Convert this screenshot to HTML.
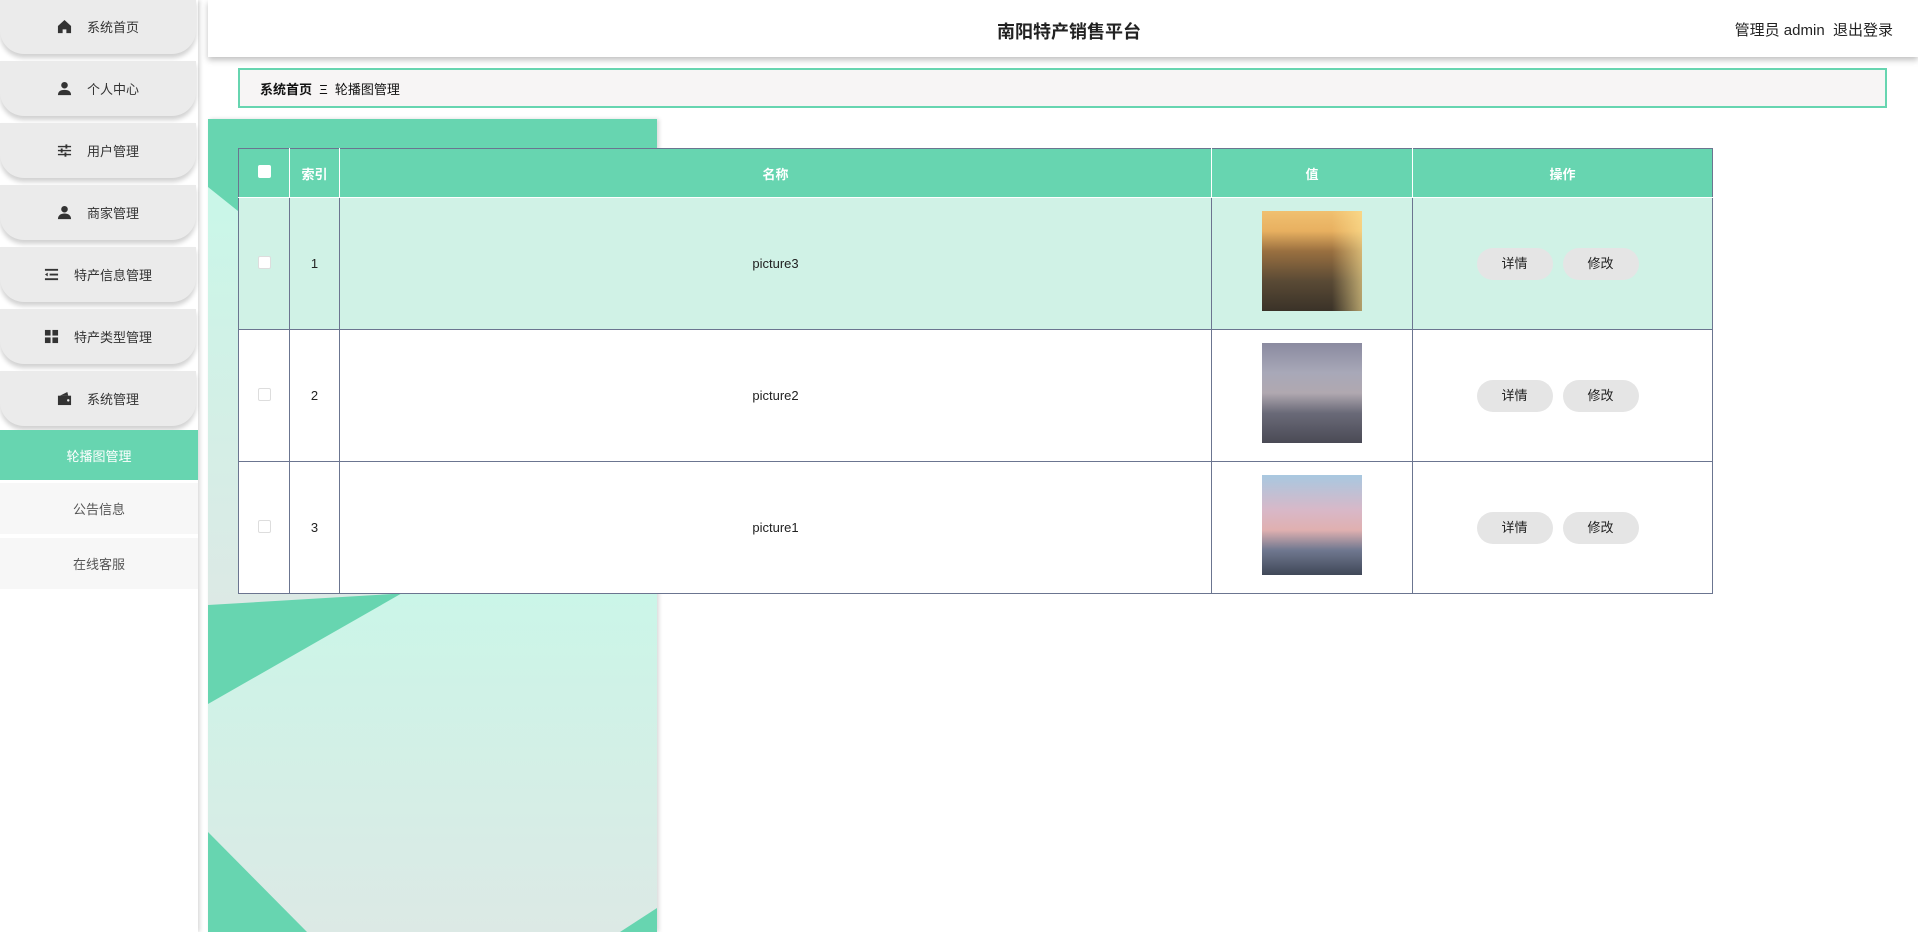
<!DOCTYPE html>
<html><head><meta charset="utf-8"><style>
*{margin:0;padding:0;box-sizing:border-box}
body{width:1918px;height:932px;overflow:hidden;background:#fff;font-family:"Liberation Sans","Noto Sans CJK SC",sans-serif;position:relative}
.side{position:absolute;left:0;top:0;width:198px;height:932px;background:#fff;box-shadow:2px 0 4px rgba(0,0,0,.15);z-index:3}
.it{position:absolute;left:0;width:196px;height:55px;background:#ebebeb;border-radius:0 0 24px 24px;box-shadow:0 4px 5px rgba(0,0,0,.18);display:flex;align-items:center;justify-content:center;font-size:13px;color:#333}
.it svg{width:15px;height:15px;margin-right:15px;fill:#333}
.sub{position:absolute;left:0;width:198px;display:flex;align-items:center;justify-content:center;font-size:13px}
.hdr{position:absolute;left:208px;top:0;width:1710px;height:57px;background:#fff;box-shadow:0 3px 6px rgba(0,0,0,.25);z-index:2}
.title{position:absolute;width:100%;top:18px;text-align:center;font-size:18px;font-weight:bold;color:#222;left:6px}
.user{position:absolute;right:25px;top:19px;font-size:15px;color:#222}
.bc{position:absolute;left:238px;top:68px;width:1649px;height:40px;border:2px solid #67d5b0;background:#f7f5f5;font-size:13px;color:#111;padding:9px 0 0 20px;z-index:1}
.bg{position:absolute;left:208px;top:119px;width:449px;height:813px;background:#67d5b0;box-shadow:2px 0 4px rgba(0,0,0,.15)}
table{position:absolute;left:238px;top:148px;width:1475px;border-collapse:collapse;font-size:13px;color:#222;z-index:1}
th{background:#67d5b0;color:#fff;height:49px;border:1px solid #fff;border-top:1px solid #6b7590;font-weight:bold}
td{height:132px;border:1px solid #6b7590;text-align:center}
tr.a td{background:#d0f2e6}
tbody tr:not(.a) td{background:#fff}
.cb{display:inline-block;width:13px;height:13px;background:#fff;border:1px solid #ddd;border-radius:2px}
.img{display:block;margin:-6px auto 0;width:100px;height:100px}
.btn{display:inline-block;width:76px;height:32px;line-height:32px;border-radius:16px;background:#e5e5e5;margin:0 5px;font-size:13px}
.ops{padding-right:10px}
</style></head><body>
<div class="bg"><svg width="449" height="813" style="position:absolute;left:0;top:0">
<defs><linearGradient id="g" x1="0" y1="0" x2="0" y2="1"><stop offset="0" stop-color="#c9f7e8"/><stop offset="1" stop-color="#dce9e5"/></linearGradient></defs>
<polygon points="0,68 90,140 449,140 449,441 184,475 0,486" fill="url(#g)"/>
<polygon points="0,585 252,441 449,441 449,789 412,813 99,813 0,713" fill="url(#g)"/>
</svg></div>
<div class="side">
<div class="it" style="top:-1px"><svg viewBox="0 0 16 16"><path d="M8 1 1 7.5V15h5v-4h4v4h5V7.5z"/></svg>系统首页</div>
<div class="it" style="top:61px"><svg viewBox="0 0 16 16"><circle cx="8" cy="4.5" r="3.5"/><path d="M1 15c0-4 3-5.5 7-5.5s7 1.5 7 5.5z"/></svg>个人中心</div>
<div class="it" style="top:123px"><svg viewBox="0 0 16 16"><path d="M1 3h14v1.5H1zM1 7.3h14v1.5H1zM1 11.6h14v1.5H1z"/><rect x="9" y="1.5" width="2" height="4.5"/><rect x="4" y="5.8" width="2" height="4.5"/><rect x="8" y="10.1" width="2" height="4.5"/></svg>用户管理</div>
<div class="it" style="top:185px"><svg viewBox="0 0 16 16"><circle cx="8" cy="4.5" r="3.5"/><path d="M1 15c0-4 3-6 7-6s7 2 7 6z"/></svg>商家管理</div>
<div class="it" style="top:247px"><svg viewBox="0 0 16 16"><path d="M1 2h14v2H1zM6 7h9v2H6zM1 12h14v2H1zM1 8l3-2v4z"/></svg>特产信息管理</div>
<div class="it" style="top:309px"><svg viewBox="0 0 16 16"><rect x="1" y="1" width="6" height="6"/><rect x="9" y="1" width="6" height="6"/><rect x="1" y="9" width="6" height="6"/><rect x="9" y="9" width="6" height="6"/></svg>特产类型管理</div>
<div class="it" style="top:371px"><svg viewBox="0 0 16 16"><path d="M1 5h14v10H1z"/><path d="M3 5l8-4 1 4z"/><circle cx="12" cy="10" r="1.3" fill="#ebebeb"/></svg>系统管理</div>
<div class="sub" style="top:430px;height:50px;background:#67d5b0;color:#fff">轮播图管理</div>
<div class="sub" style="top:483px;height:51px;background:#f7f7f7;color:#555">公告信息</div>
<div class="sub" style="top:538px;height:51px;background:#f7f7f7;color:#555">在线客服</div>
</div>
<div class="hdr"><div class="title">南阳特产销售平台</div><div class="user">管理员 admin &nbsp;退出登录</div></div>
<div class="bc"><b>系统首页</b> &nbsp;Ξ&nbsp; 轮播图管理</div>
<table>
<thead><tr><th style="width:51px;border-left:1px solid #6b7590"><span class="cb" style="border:none"></span></th><th style="width:50px">索引</th><th style="width:872px">名称</th><th style="width:201px">值</th><th style="border-right:1px solid #6b7590">操作</th></tr></thead>
<tbody>
<tr class="a"><td><span class="cb"></span></td><td>1</td><td>picture3</td><td><span class="img" style="background:linear-gradient(90deg,transparent 70%,rgba(255,230,150,.6)),linear-gradient(180deg,#f0c070 0%,#e8b060 20%,#9a7040 40%,#5a4a35 70%,#3a3228 100%)"></span></td><td class="ops"><span class="btn">详情</span><span class="btn">修改</span></td></tr>
<tr><td><span class="cb"></span></td><td>2</td><td>picture2</td><td><span class="img" style="background:linear-gradient(180deg,#8a8aa0 0%,#a8a8b8 30%,#b0a8b0 50%,#6a6a78 70%,#4a4a55 100%)"></span></td><td class="ops"><span class="btn">详情</span><span class="btn">修改</span></td></tr>
<tr><td><span class="cb"></span></td><td>3</td><td>picture1</td><td><span class="img" style="background:linear-gradient(180deg,#a8c8e0 0%,#d8b8c8 35%,#e0b0b0 55%,#707890 75%,#404858 100%)"></span></td><td class="ops"><span class="btn">详情</span><span class="btn">修改</span></td></tr>
</tbody></table>
</body></html>
